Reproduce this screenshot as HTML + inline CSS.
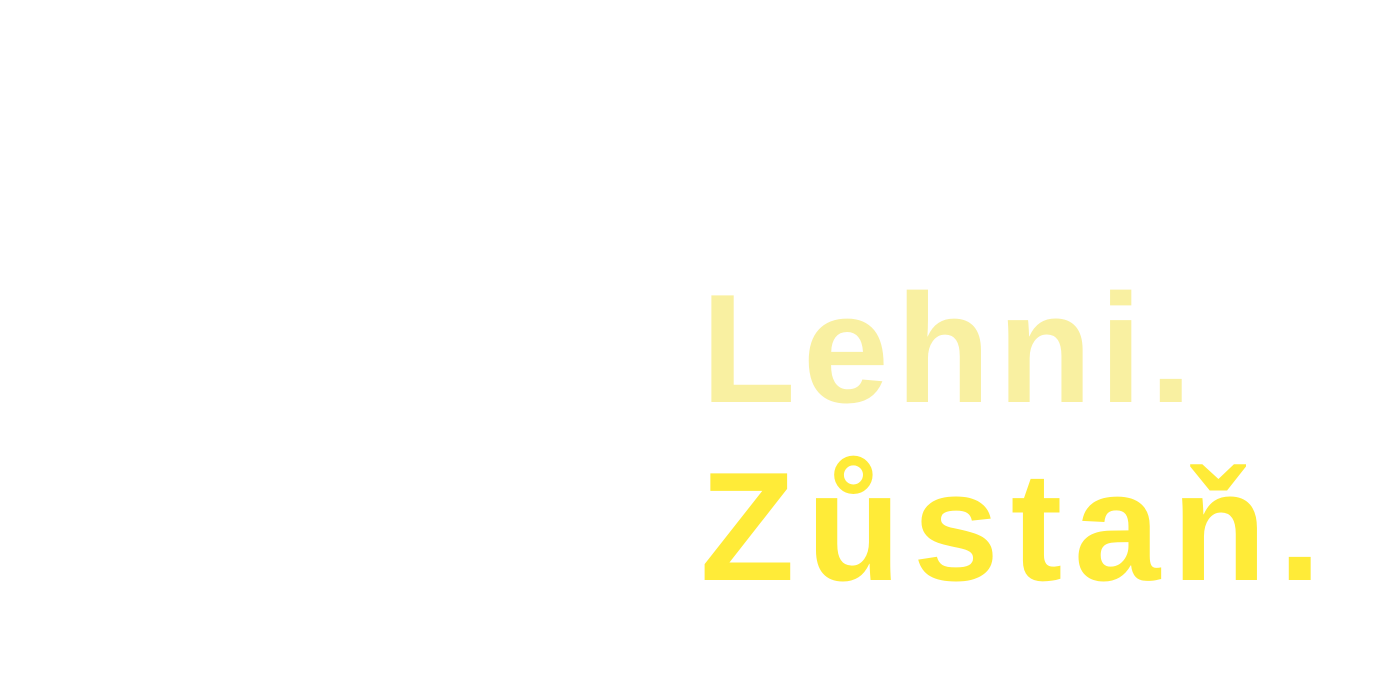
<!DOCTYPE html>
<html><head><meta charset="utf-8"><style>
html,body{margin:0;padding:0;background:#fff;width:1398px;height:681px;overflow:hidden}
.t{position:absolute;font-family:"Liberation Sans",sans-serif;font-weight:bold;font-size:155px;line-height:1;white-space:nowrap}
#a{left:701px;top:271px;color:#f9f0a1;letter-spacing:7px}
#b{left:700px;top:449px;color:#ffeb38;letter-spacing:11.7px}
</style></head><body>
<div class="t" id="a">Lehni.</div>
<div class="t" id="b">Zůstaň.</div>
</body></html>
